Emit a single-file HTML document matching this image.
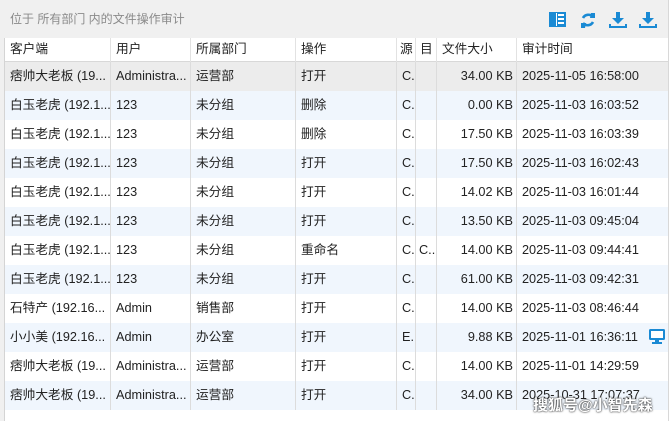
<!DOCTYPE html>
<html><head><meta charset="utf-8"><style>
*{margin:0;padding:0;box-sizing:border-box}
body{width:671px;height:421px;overflow:hidden;background:#f0f0f0;font-family:"Liberation Sans","Noto Sans CJK SC",sans-serif;font-size:12px;color:#222;position:relative}
.title{position:absolute;left:10px;top:10px;color:#8a8a8a;font-size:12px}
.tbl{position:absolute;left:4px;top:38px;width:664px;height:383px;background:#fff;border-left:1px solid #d4d4d4;font-size:12.7px}
.row{position:absolute;left:0;width:664px;height:29px}
.row div{position:absolute;top:0;height:29px;line-height:29px;border-right:1px solid #dcdcdc;padding-left:5px;white-space:nowrap;overflow:hidden}
.hd{height:24px;background:#fff;border-bottom:1px solid #d8d8d8}
.hd div{height:24px;line-height:23px;border-right:1px solid #e2e2e2}
.c1{left:0;width:106px}.c2{left:106px;width:80px}.c3{left:186px;width:105px}.c4{left:291px;width:101px}
.c5{left:392px;width:19px}.c6{left:411px;width:21px}.c7{left:432px;width:80px;text-align:right;padding-right:3px}
.c8{left:512px;width:152px;border-right:none!important}
.sel{background:#ececec}.b{background:#f0f6fd}
.wm{position:absolute;left:533px;top:394px;font-size:15px;color:#fff;font-weight:bold;text-shadow:0 0 2px #333,0 0 1px #333}
</style></head><body>
<div class="title">位于 所有部门 内的文件操作审计</div>
<svg style="position:absolute;left:549px;top:12px" width="110" height="17" viewBox="0 0 110 17">
<g fill="#1a8ad4">
<rect x="0" y="0" width="17" height="15"/>
<rect x="9" y="2" width="6" height="2" fill="#fff"/><rect x="9" y="6" width="6" height="2" fill="#fff"/><rect x="9" y="10" width="6" height="2" fill="#fff"/>
<rect x="7" y="1" width="1" height="13" fill="#fff"/>
</g>
<g fill="none" stroke="#1a8ad4" stroke-width="2.6">
<path d="M34 6 A6 6 0 0 1 44 5"/><path d="M44 10 A6 6 0 0 1 34 11"/>
</g>
<path d="M42 1 L46 1 L46 6 L41 6Z M36 16 L32 16 L32 11 L37 11Z" fill="#1a8ad4"/>
<g fill="#1a8ad4">
<rect x="67" y="0" width="4" height="7"/><path d="M63 6 L75 6 L69 12Z"/>
<rect x="60" y="12" width="2" height="4"/><rect x="76" y="12" width="2" height="4"/><rect x="60" y="14" width="18" height="2"/>
<rect x="97" y="0" width="4" height="7"/><path d="M93 6 L105 6 L99 12Z"/>
<rect x="90" y="12" width="2" height="4"/><rect x="106" y="12" width="2" height="4"/><rect x="90" y="14" width="18" height="2"/>
</g>
</svg>
<div class="tbl">
<div class="row hd" style="top:0"><div class="c1">客户端</div><div class="c2">用户</div><div class="c3">所属部门</div><div class="c4">操作</div><div class="c5" style="padding-left:3px">源</div><div class="c6" style="padding-left:4px">目</div><div class="c7" style="text-align:left;padding-left:5px">文件大小</div><div class="c8">审计时间</div></div>
<div class="row sel" style="top:24px"><div class="c1">痞帅大老板 (19...</div><div class="c2">Administra...</div><div class="c3">运营部</div><div class="c4">打开</div><div class="c5">C.</div><div class="c6"></div><div class="c7">34.00 KB</div><div class="c8">2025-11-05 16:58:00</div></div>
<div class="row b" style="top:53px"><div class="c1">白玉老虎 (192.1...</div><div class="c2">123</div><div class="c3">未分组</div><div class="c4">删除</div><div class="c5">C.</div><div class="c6"></div><div class="c7">0.00 KB</div><div class="c8">2025-11-03 16:03:52</div></div>
<div class="row" style="top:82px"><div class="c1">白玉老虎 (192.1...</div><div class="c2">123</div><div class="c3">未分组</div><div class="c4">删除</div><div class="c5">C.</div><div class="c6"></div><div class="c7">17.50 KB</div><div class="c8">2025-11-03 16:03:39</div></div>
<div class="row b" style="top:111px"><div class="c1">白玉老虎 (192.1...</div><div class="c2">123</div><div class="c3">未分组</div><div class="c4">打开</div><div class="c5">C.</div><div class="c6"></div><div class="c7">17.50 KB</div><div class="c8">2025-11-03 16:02:43</div></div>
<div class="row" style="top:140px"><div class="c1">白玉老虎 (192.1...</div><div class="c2">123</div><div class="c3">未分组</div><div class="c4">打开</div><div class="c5">C.</div><div class="c6"></div><div class="c7">14.02 KB</div><div class="c8">2025-11-03 16:01:44</div></div>
<div class="row b" style="top:169px"><div class="c1">白玉老虎 (192.1...</div><div class="c2">123</div><div class="c3">未分组</div><div class="c4">打开</div><div class="c5">C.</div><div class="c6"></div><div class="c7">13.50 KB</div><div class="c8">2025-11-03 09:45:04</div></div>
<div class="row" style="top:198px"><div class="c1">白玉老虎 (192.1...</div><div class="c2">123</div><div class="c3">未分组</div><div class="c4">重命名</div><div class="c5">C.</div><div class="c6" style="padding-left:3px">C..</div><div class="c7">14.00 KB</div><div class="c8">2025-11-03 09:44:41</div></div>
<div class="row b" style="top:227px"><div class="c1">白玉老虎 (192.1...</div><div class="c2">123</div><div class="c3">未分组</div><div class="c4">打开</div><div class="c5">C.</div><div class="c6"></div><div class="c7">61.00 KB</div><div class="c8">2025-11-03 09:42:31</div></div>
<div class="row" style="top:256px"><div class="c1">石特产 (192.16...</div><div class="c2">Admin</div><div class="c3">销售部</div><div class="c4">打开</div><div class="c5">C.</div><div class="c6"></div><div class="c7">14.00 KB</div><div class="c8">2025-11-03 08:46:44</div></div>
<div class="row b" style="top:285px"><div class="c1">小小美 (192.16...</div><div class="c2">Admin</div><div class="c3">办公室</div><div class="c4">打开</div><div class="c5">E..</div><div class="c6"></div><div class="c7">9.88 KB</div><div class="c8">2025-11-01 16:36:11</div></div>
<div class="row" style="top:314px"><div class="c1">痞帅大老板 (19...</div><div class="c2">Administra...</div><div class="c3">运营部</div><div class="c4">打开</div><div class="c5">C.</div><div class="c6"></div><div class="c7">14.00 KB</div><div class="c8">2025-11-01 14:29:59</div></div>
<div class="row b" style="top:343px"><div class="c1">痞帅大老板 (19...</div><div class="c2">Administra...</div><div class="c3">运营部</div><div class="c4">打开</div><div class="c5">C.</div><div class="c6"></div><div class="c7">34.00 KB</div><div class="c8">2025-10-31 17:07:37</div></div>
</div>
<svg style="position:absolute;left:649px;top:329px" width="16" height="15" viewBox="0 0 16 15"><rect x="0" y="0" width="16" height="11" rx="1.5" fill="#1a8ad4"/><rect x="2" y="2" width="12" height="7" fill="#fff"/><rect x="6" y="11" width="4" height="2" fill="#1a8ad4"/><rect x="3" y="13" width="10" height="2" fill="#1a8ad4"/></svg>
<div style="position:absolute;left:668px;top:0;width:3px;height:421px;background:#fff;border-left:1px solid #d8d8d8"></div>
<div class="wm">搜狐号@小智先森</div>
</body></html>
